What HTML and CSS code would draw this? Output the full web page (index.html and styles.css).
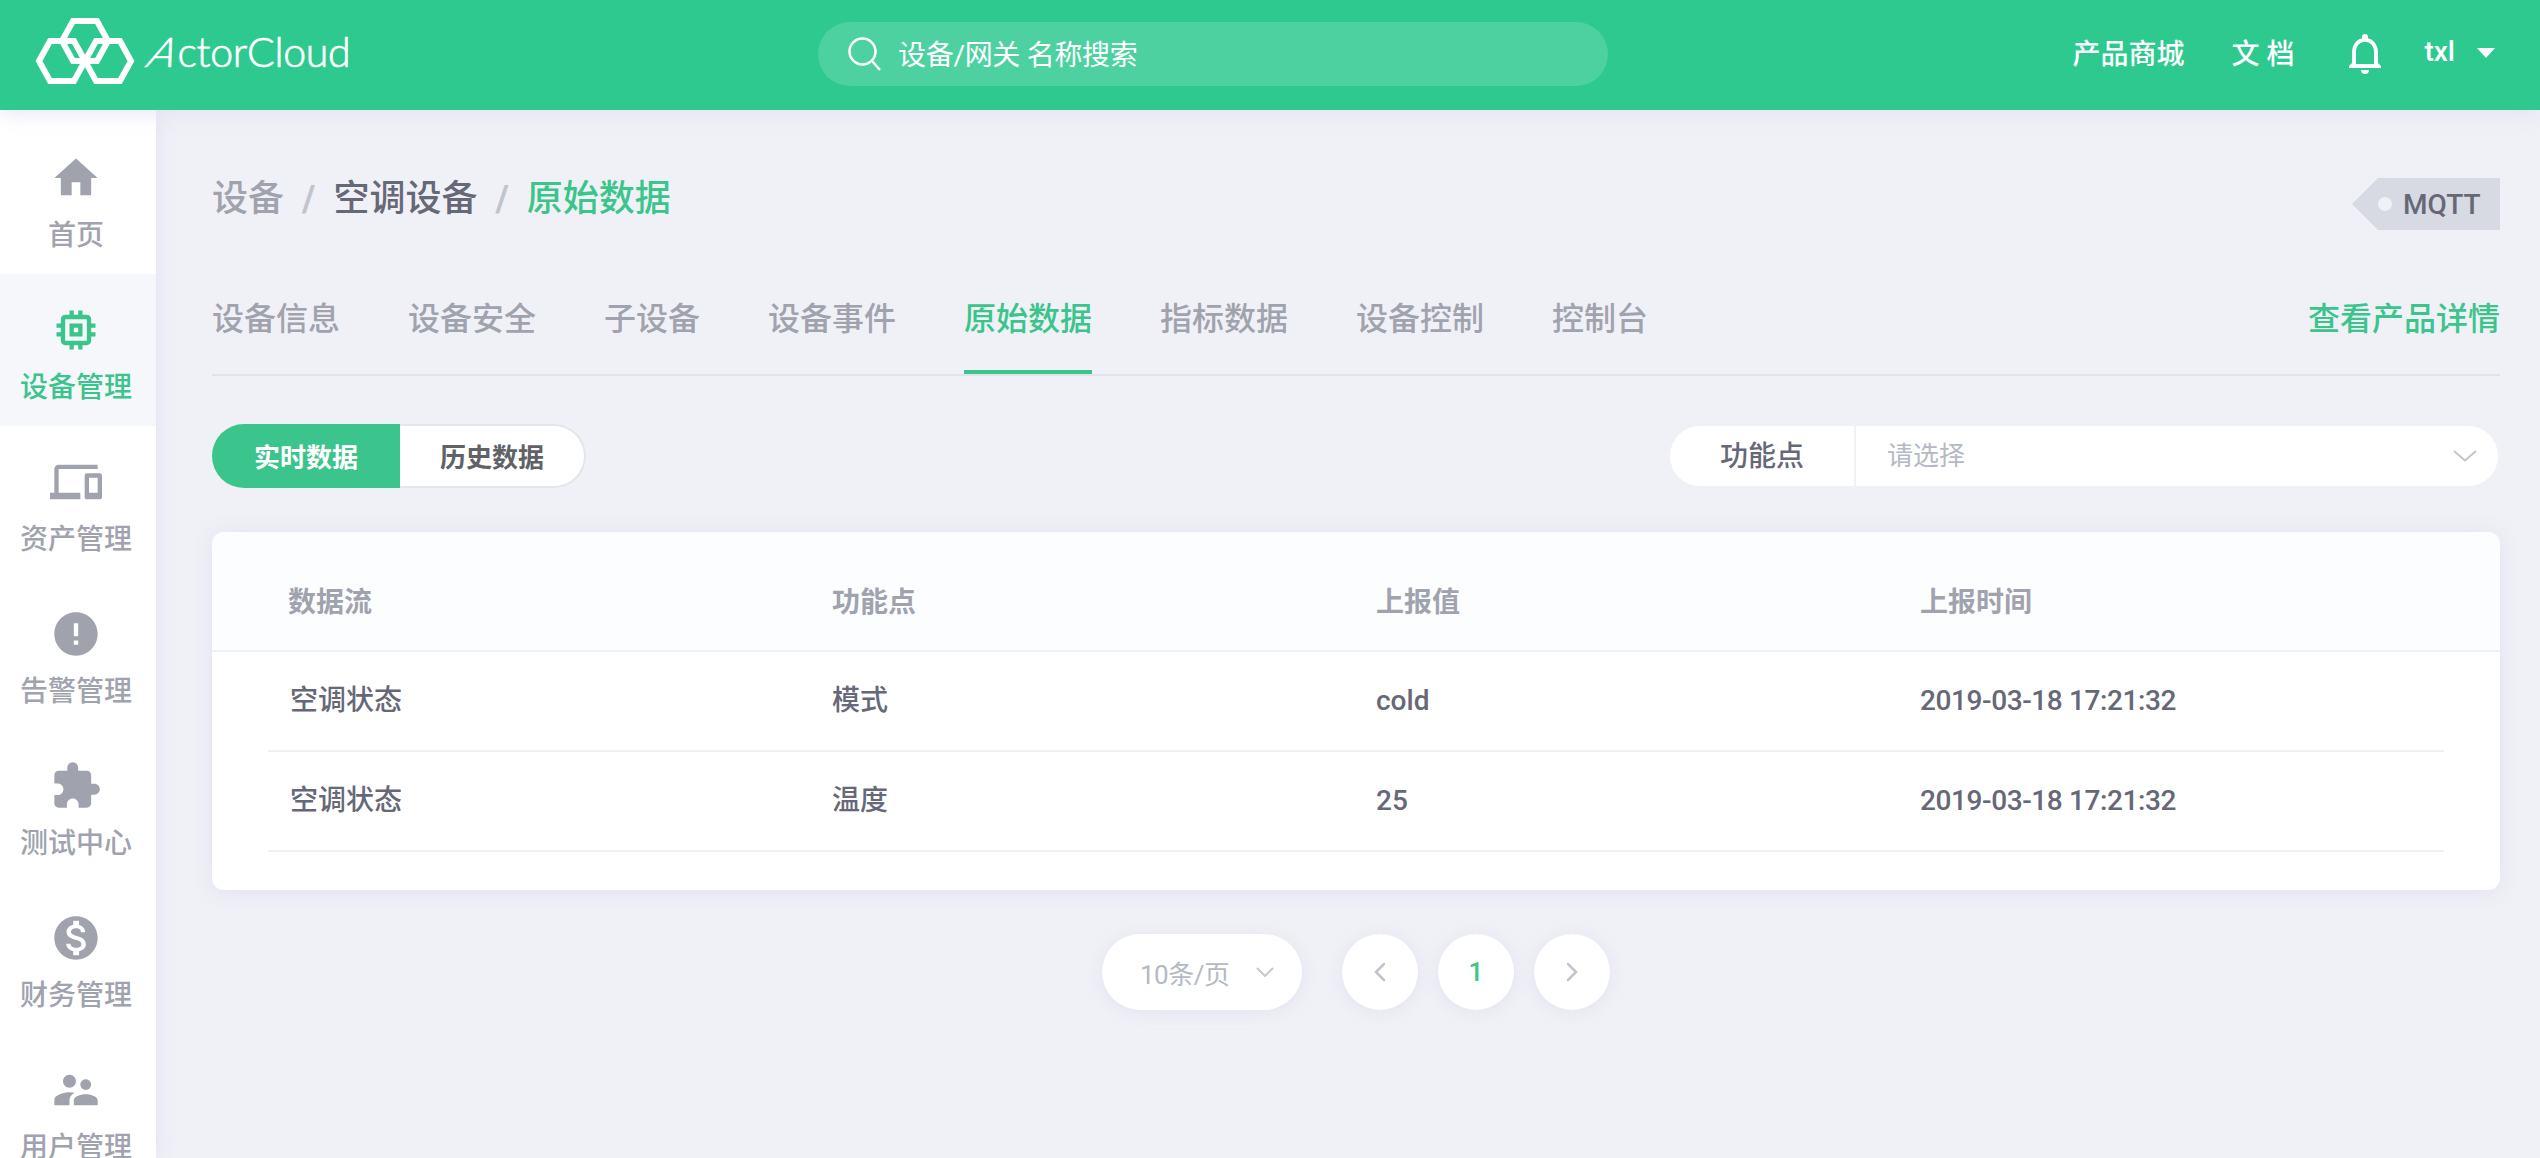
FILE: index.html
```html
<!doctype html>
<html lang="zh-CN">
    <head>
        <title>ActorCloud</title>
        <meta charset="UTF-8">
        <link rel="stylesheet" href="styles.css">
    </head>

    <body>
        <!--Topbar Start-->
        <header class="topbar">
            <div class="logo">
                <svg class="logo-mark" viewBox="0 0 100 68" width="100" height="68">
                    <path d="M27 24L38 4H62L73 24L62 44H38Z"/>
                    <path d="M4 44L15 24H39L50 44L39 64H15Z"/>
                    <path d="M50 44L61 24H85L96 44L85 64H61Z"/>
                </svg>
                <span class="logo-text"><i>A</i>ctorCloud</span>
            </div>
            <div class="search">
                <svg viewBox="0 0 34 34" width="34" height="34">
                    <circle cx="14.5" cy="14.5" r="13"/>
                    <path d="M24 24l8 9"/>
                </svg>
                <span>设备/网关 名称搜索</span>
            </div>
            <nav class="top-menu">
                <a class="mall">产品商城</a>
                <a class="docs">文 档</a>
                <svg class="bell" viewBox="0 0 34 40" width="34" height="40">
                    <path class="line" d="M6 33V19C6 11 10.500 6 17 6S28 11 28 19V33"/>
                    <path d="M14 6V3a3 3 0 0 1 6 0v3zM1 34v-2l4-4h24l4 4v2zM13 36h8a4 4 0 0 1-8 0z"/>
                    <path class="inside" d="M8 30V19C8 12 11.500 8 17 8S26 12 26 19V30z"/>
                </svg>
                <a class="user">txl</a>
                <i class="caret"></i>
            </nav>
        </header>
        <!--Topbar End-->

        <div class="wrapper">
            <!--Sidebar Start-->
            <aside class="sidebar">
                <a class="item">
                    <svg viewBox="0 0 24 24"><path d="M10 20v-6h4v6h5v-8h3L12 3 2 12h3v8z"/></svg>
                    <span>首页</span>
                </a>
                <a class="item active">
                    <svg viewBox="0 0 24 24"><path d="M15 9H9v6h6V9zm-2 4h-2v-2h2v2zm8-2V9h-2V7c0-1.100-.9-2-2-2h-2V3h-2v2h-2V3H9v2H7c-1.100 0-2 .9-2 2v2H3v2h2v2H3v2h2v2c0 1.100.9 2 2 2h2v2h2v-2h2v2h2v-2h2c1.100 0 2-.9 2-2v-2h2v-2h-2v-2h2zm-4 6H7V7h10v10z"/></svg>
                    <span>设备管理</span>
                </a>
                <a class="item">
                    <svg viewBox="0 0 24 24"><path d="M4 6h18V4H4c-1.100 0-2 .9-2 2v11H0v3h14v-3H4V6zm19 2h-6c-.55 0-1 .45-1 1v10c0 .55.45 1 1 1h6c.55 0 1-.45 1-1V9c0-.55-.45-1-1-1zm-1 9h-4v-7h4v7z"/></svg>
                    <span>资产管理</span>
                </a>
                <a class="item">
                    <svg viewBox="0 0 24 24"><path d="M12 2C6.480 2 2 6.480 2 12s4.480 10 10 10 10-4.480 10-10S17.520 2 12 2zm1 15h-2v-2h2v2zm0-4h-2V7h2v6z"/></svg>
                    <span>告警管理</span>
                </a>
                <a class="item">
                    <svg viewBox="0 0 24 24"><path d="M20.500 11H19V7c0-1.100-.9-2-2-2h-4V3.500C13 2.120 11.880 1 10.500 1S8 2.120 8 3.500V5H4c-1.100 0-1.990.9-1.990 2v3.800H3.500c1.490 0 2.700 1.210 2.700 2.700s-1.210 2.700-2.700 2.700H2V20c0 1.100.9 2 2 2h3.800v-1.500c0-1.490 1.210-2.700 2.700-2.700 1.490 0 2.700 1.210 2.700 2.700V22H17c1.100 0 2-.9 2-2v-4h1.500c1.380 0 2.500-1.120 2.500-2.500S21.880 11 20.500 11z"/></svg>
                    <span>测试中心</span>
                </a>
                <a class="item">
                    <svg viewBox="0 0 24 24"><path d="M12 2C6.480 2 2 6.480 2 12s4.480 10 10 10 10-4.480 10-10S17.520 2 12 2zm1.410 16.090V20h-2.670v-1.930c-1.710-.36-3.160-1.460-3.270-3.400h1.960c.1 1.050.82 1.870 2.650 1.870 1.960 0 2.400-.98 2.400-1.590 0-.83-.44-1.610-2.670-2.140-2.480-.6-4.180-1.620-4.180-3.670 0-1.720 1.390-2.840 3.110-3.210V4h2.670v1.950c1.860.45 2.790 1.860 2.850 3.390H14.300c-.05-1.110-.64-1.870-2.220-1.870-1.500 0-2.400.68-2.400 1.640 0 .84.65 1.390 2.670 1.910s4.180 1.390 4.180 3.910c-.01 1.830-1.380 2.830-3.120 3.160z"/></svg>
                    <span>财务管理</span>
                </a>
                <a class="item">
                    <svg viewBox="0 0 24 24"><path d="M16.500 12c1.380 0 2.490-1.120 2.490-2.500S17.880 7 16.500 7C15.120 7 14 8.120 14 9.500s1.120 2.500 2.500 2.500zM9 11c1.660 0 2.990-1.340 2.990-3S10.660 5 9 5C7.340 5 6 6.340 6 8s1.340 3 3 3zm7.500 3c-1.830 0-5.500.92-5.500 2.750V19h11v-2.250c0-1.830-3.670-2.750-5.500-2.750zM9 13c-2.330 0-7 1.170-7 3.500V19h7v-2.250c0-.85.33-2.340 2.370-3.470C10.500 13.100 9.660 13 9 13z"/></svg>
                    <span>用户管理</span>
                </a>
            </aside>
            <!--Sidebar End-->

            <!--Content Start-->
            <main class="content">
                <div class="page-head">
                    <div class="breadcrumb">
                        <a>设备</a><b>/</b><a class="dark">空调设备</a><b>/</b><a class="green">原始数据</a>
                    </div>
                    <div class="tag"><i></i>MQTT</div>
                </div>

                <nav class="tabs">
                    <a>设备信息</a>
                    <a>设备安全</a>
                    <a>子设备</a>
                    <a>设备事件</a>
                    <a class="active">原始数据</a>
                    <a>指标数据</a>
                    <a>设备控制</a>
                    <a>控制台</a>
                    <a class="detail">查看产品详情</a>
                </nav>

                <div class="tools">
                    <div class="switch">
                        <button class="on">实时数据</button><button>历史数据</button>
                    </div>
                    <div class="filter">
                        <span class="name">功能点</span>
                        <span class="select">请选择
                            <svg viewBox="0 0 24 12" width="24" height="12"><path d="M1 1l11 9.500L23 1"/></svg>
                        </span>
                    </div>
                </div>

                <div class="card">
                    <div class="row head">
                        <span>数据流</span><span>功能点</span><span>上报值</span><span>上报时间</span>
                    </div>
                    <div class="row">
                        <span>空调状态</span><span>模式</span><span>cold</span><span class="time">2019-03-18 17:21:32</span>
                    </div>
                    <div class="row">
                        <span>空调状态</span><span>温度</span><span>25</span><span class="time">2019-03-18 17:21:32</span>
                    </div>
                </div>

                <div class="pager">
                    <div class="size">10条/页
                        <svg viewBox="0 0 18 10" width="18" height="10"><path d="M1 1l8 8 8-8"/></svg>
                    </div>
                    <button><svg viewBox="0 0 12 20" width="12" height="20"><path d="M10 2l-8 8 8 8"/></svg></button>
                    <button class="current">1</button>
                    <button><svg viewBox="0 0 12 20" width="12" height="20"><path d="M2 2l8 8-8 8"/></svg></button>
                </div>
            </main>
            <!--Content End-->
        </div>
    </body>
</html>
```

FILE: styles.css
```css
*{
    box-sizing: border-box;
}
body{
    margin: 0;
    height: 1158px;
    overflow: hidden;
    font-family: Roboto, "Noto Sans CJK SC", sans-serif;
    font-size: 28px;
    font-weight: 500;
    color: #666878;
    background: #f0f1f6;
}
svg{
    display: block;
    flex: none;
}
button{
    padding: 0;
    border: 0;
    font-family: inherit;
    background: white;
}

/* Topbar */
.topbar{
    position: relative;
    z-index: 2;
    height: 110px;
    display: flex;
    align-items: center;
    padding: 0 45px 2px 35px;
    color: white;
    background: #2dc98f;
    box-shadow: 0 2px 20px rgba(220, 220, 240, 0.8);
}
.logo{
    display: flex;
    align-items: center;
    width: 783px;
}
.logo-mark{
    margin-top: -6px;
    fill: none;
    stroke: white;
    stroke-width: 6;
}
.logo-text{
    margin: -4px 0 0 16px;
    font-family: Lato, sans-serif;
    font-size: 41px;
    font-weight: 300;
    line-height: 60px;
    letter-spacing: -0.3px;
    -webkit-text-stroke: 0.7px white;
}
.logo-text i{
    display: inline-block;
    font-style: normal;
    transform: skewX(-24deg);
}
.search{
    display: flex;
    align-items: center;
    width: 790px;
    height: 64px;
    padding-left: 30px;
    border-radius: 32px;
    font-weight: 400;
    letter-spacing: -0.3px;
    background: #4dd1a0;
}
.search svg{
    margin-right: 16px;
    fill: none;
    stroke: white;
    stroke-width: 2.5;
}
.search span{
    padding-bottom: 2px;
}
.top-menu{
    display: flex;
    align-items: center;
    margin-left: auto;
}
.top-menu a{
    padding-bottom: 5px;
}
.mall{
    margin-right: 47px;
}
.docs{
    margin-right: 54px;
}
.bell{
    margin-right: 42px;
    fill: white;
}
.bell .line{
    fill: none;
    stroke: white;
    stroke-width: 4;
}
.bell .inside{
    fill: #2dc98f;
}
.caret{
    margin: -3px 0 0 22px;
    border: 9px solid transparent;
    border-top: 10px solid white;
    border-bottom: 0;
}
/* Topbar */

.wrapper{
    display: flex;
    height: 1048px;
}

/* Sidebar */
.sidebar{
    width: 156px;
    flex: none;
    padding-top: 12px;
    overflow: hidden;
    background: white;
    box-shadow: 0 0 20px rgba(220, 220, 240, 0.8);
}
.item{
    display: flex;
    flex-direction: column;
    align-items: center;
    height: 152px;
    padding: 30px 4px 0 0;
    color: #a0a3ae;
}
.item svg{
    width: 52px;
    height: 52px;
    fill: currentColor;
}
.item span{
    margin-top: 12px;
    line-height: 40px;
}
.item.active{
    color: #3bc48b;
    background: #f5f7fb;
}
/* Sidebar */

.content{
    flex: 1;
    padding: 0 40px 0 56px;
}

/* Page head */
.page-head{
    display: flex;
    justify-content: space-between;
    height: 162px;
    padding-top: 60px;
}
.breadcrumb{
    padding-top: 3px;
    font-size: 36px;
    line-height: 52px;
    color: #a0a3ae;
}
.breadcrumb b{
    margin: 0 18px;
    font-weight: 700;
    color: #c0c4cc;
}
.breadcrumb .dark{
    color: #666878;
}
.breadcrumb .green{
    color: #3bc48b;
}
.tag{
    display: flex;
    align-items: center;
    width: 148px;
    height: 52px;
    margin-top: 8px;
    padding-left: 26px;
    background: #d7dae2;
    clip-path: polygon(26px 0, 100% 0, 100% 100%, 26px 100%, 0 50%);
}
.tag i{
    width: 14px;
    height: 14px;
    margin-right: 11px;
    border-radius: 50%;
    background: #f0f1f6;
}

/* Tabs */
.tabs{
    display: flex;
    height: 104px;
    border-bottom: 2px solid #e2e4ea;
    font-size: 32px;
    line-height: 95px;
    color: #a0a3ae;
}
.tabs a{
    margin-right: 68px;
}
.tabs .active{
    color: #3bc48b;
    border-bottom: 4px solid #3bc48b;
}
.tabs .detail{
    margin: 0 0 0 auto;
    color: #3bc48b;
}

/* Tools */
.tools{
    display: flex;
    align-items: center;
    justify-content: space-between;
    height: 64px;
    margin-top: 48px;
}
.switch{
    display: flex;
}
.switch button{
    width: 186px;
    height: 64px;
    padding-bottom: 2px;
    border: 2px solid #e4e5ea;
    border-left: 0;
    border-radius: 0 32px 32px 0;
    font-size: 26px;
    font-weight: 700;
    color: #606266;
}
.switch .on{
    width: 188px;
    border: 0;
    border-radius: 32px 0 0 32px;
    color: white;
    background: #3bc48b;
}
.filter{
    display: flex;
    width: 828px;
    height: 60px;
    margin-right: 2px;
    border-radius: 30px;
    line-height: 62px;
    background: white;
}
.filter .name{
    width: 186px;
    padding-left: 50px;
    border-right: 2px solid #f0f1f6;
}
.filter .select{
    display: flex;
    flex: 1;
    align-items: center;
    justify-content: space-between;
    padding: 0 21px 0 31px;
    font-size: 26px;
    font-weight: 400;
    color: #b5b9c5;
}
.filter svg, .size svg{
    fill: none;
    stroke: #c0c4cc;
    stroke-width: 1.8;
}

/* Table */
.card{
    height: 358px;
    margin-top: 44px;
    border-radius: 12px;
    overflow: hidden;
    background: white;
    box-shadow: 0 2px 20px rgba(220, 220, 240, 0.8);
}
.row{
    display: grid;
    grid-template-columns: repeat(4, 1fr);
    align-items: center;
    height: 100px;
    margin: 0 56px;
    border-bottom: 2px solid #f0f1f6;
    line-height: 40px;
}
.row span{
    padding-left: 20px;
}
.row span:first-child{
    padding-left: 22px;
}
.row .time{
    letter-spacing: -0.4px;
}
.row.head{
    height: 120px;
    margin: 0;
    padding: 17px 56px 0;
    font-weight: 700;
    line-height: normal;
    color: #a0a3ae;
    background: #fcfdff;
}
.row.head span{
    padding-left: 20px;
}

/* Pager */
.pager{
    display: flex;
    justify-content: center;
    gap: 20px;
    margin-top: 44px;
}
.size, .pager button{
    display: flex;
    align-items: center;
    justify-content: center;
    width: 76px;
    height: 76px;
    border-radius: 38px;
    background: white;
    box-shadow: 0 2px 16px rgba(220, 220, 240, 0.7);
}
.size{
    justify-content: space-between;
    width: 200px;
    margin-right: 20px;
    padding: 0 28px 0 38px;
    font-size: 26px;
    font-weight: 400;
    letter-spacing: -0.5px;
    color: #b5b9c5;
}
.pager button svg{
    fill: none;
    stroke: #c0c4cc;
    stroke-width: 2.5;
    stroke-linecap: round;
}
.pager .current{
    font-size: 26px;
    font-weight: 500;
    color: #3bc48b;
}
```
